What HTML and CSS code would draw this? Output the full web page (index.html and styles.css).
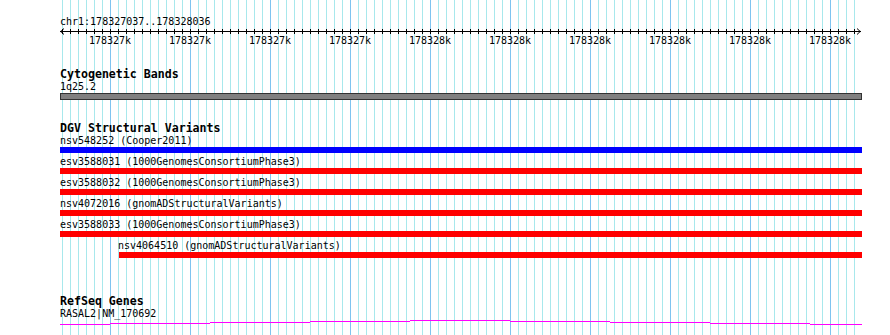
FILE: index.html
```html
<!DOCTYPE html>
<html>
<head>
<meta charset="utf-8">
<link rel="stylesheet" href="styles.css">
</head>
<body>
<div class="view">
  <div class="ruler">
    <div class="loc">chr1:178327037..178328036</div>
    <svg class="scale" width="802" height="7" viewBox="0 0 802 7">
      <defs>
        <pattern id="tick" x="2" y="0" width="8" height="7" patternUnits="userSpaceOnUse">
          <rect x="0" y="1" width="1" height="5" fill="#000"/>
        </pattern>
      </defs>
      <rect x="2" y="0" width="793" height="7" fill="url(#tick)"/>
      <line x1="0" y1="3.5" x2="801" y2="3.5" stroke="#000" stroke-width="1"/>
      <polyline points="4,0.5 0.8,3.5 4,6.5" fill="none" stroke="#000" stroke-width="1"/>
      <polyline points="797,0.5 800.2,3.5 797,6.5" fill="none" stroke="#000" stroke-width="1"/>
    </svg>
    <div class="ticks">
      <span>178327k</span><span>178327k</span><span>178327k</span><span>178327k</span><span>178328k</span><span>178328k</span><span>178328k</span><span>178328k</span><span>178328k</span><span>178328k</span>
    </div>
  </div>

  <section class="track cyto">
    <h2 class="title">Cytogenetic Bands</h2>
    <div class="feat-label">1q25.2</div>
    <div class="band"></div>
  </section>

  <section class="track dgv">
    <h2 class="title">DGV Structural Variants</h2>
    <div class="rows">
      <div class="row"><div class="feat-label">nsv548252 (Cooper2011)</div><div class="bar blue"></div></div>
      <div class="row"><div class="feat-label">esv3588031 (1000GenomesConsortiumPhase3)</div><div class="bar red"></div></div>
      <div class="row"><div class="feat-label">esv3588032 (1000GenomesConsortiumPhase3)</div><div class="bar red"></div></div>
      <div class="row"><div class="feat-label">nsv4072016 (gnomADStructuralVariants)</div><div class="bar red"></div></div>
      <div class="row"><div class="feat-label">esv3588033 (1000GenomesConsortiumPhase3)</div><div class="bar red"></div></div>
      <div class="row shifted"><div class="feat-label">nsv4064510 (gnomADStructuralVariants)</div><div class="bar red"></div></div>
    </div>
  </section>

  <section class="track refseq">
    <h2 class="title">RefSeq Genes</h2>
    <div class="feat-label">RASAL2|NM_170692</div>
    <svg class="gene" width="802" height="6" viewBox="0 0 802 6" shape-rendering="crispEdges">
      <g fill="#ff00ff">
        <rect x="0" y="4" width="50" height="1"/>
        <rect x="50" y="3" width="100" height="1"/>
        <rect x="150" y="2" width="100" height="1"/>
        <rect x="250" y="1" width="100" height="1"/>
        <rect x="350" y="0" width="100" height="1"/>
        <rect x="450" y="1" width="100" height="1"/>
        <rect x="550" y="2" width="100" height="1"/>
        <rect x="650" y="3" width="100" height="1"/>
        <rect x="750" y="4" width="52" height="1"/>
      </g>
    </svg>
  </section>
</div>
</body>
</html>
```

FILE: styles.css
```css
html, body {
  margin: 0;
  padding: 0;
  background: #ffffff;
}

body {
  font-family: "DejaVu Sans Mono", "Liberation Mono", monospace;
  font-size: 10px;
  color: #000000;
}

.view {
  margin-left: 60px;
  width: 802px;
  height: 335px;
  overflow: hidden;
  background-image:
    linear-gradient(to right, #7ec4f0 0 1px, transparent 1px),
    linear-gradient(to right, #a8e8ec 0 1px, transparent 1px);
  background-size: 80px 100%, 8px 100%;
  background-position: 50px 0, 2px 0;
  background-repeat: repeat-x, repeat-x;
}

.ruler {
  padding-top: 16px;
}

.loc,
.feat-label,
.ticks {
  height: 12px;
  line-height: 12px;
  white-space: nowrap;
}

.scale {
  display: block;
}

.ticks {
  display: flex;
  padding-left: 10px;
}

.ticks span {
  flex: 0 0 80px;
  text-align: center;
}

.title {
  margin: 0;
  font-size: 11.6px;
  font-weight: bold;
  line-height: 14px;
  height: 14px;
  white-space: nowrap;
}

.cyto {
  margin-top: 20px;
}

.band {
  height: 5px;
  background: #808080;
  border: 1px solid #333333;
}

.dgv {
  margin-top: 21px;
}

.rows {
  display: flex;
  flex-direction: column;
  gap: 3px;
}

.bar {
  height: 6px;
}

.bar.blue {
  background: #0000ff;
}

.bar.red {
  background: #ff0000;
}

.row.shifted {
  margin-left: 58px;
}

.row.shifted .bar {
  margin-left: 1px;
}

.refseq {
  margin-top: 36px;
}

.gene {
  display: block;
}
```
